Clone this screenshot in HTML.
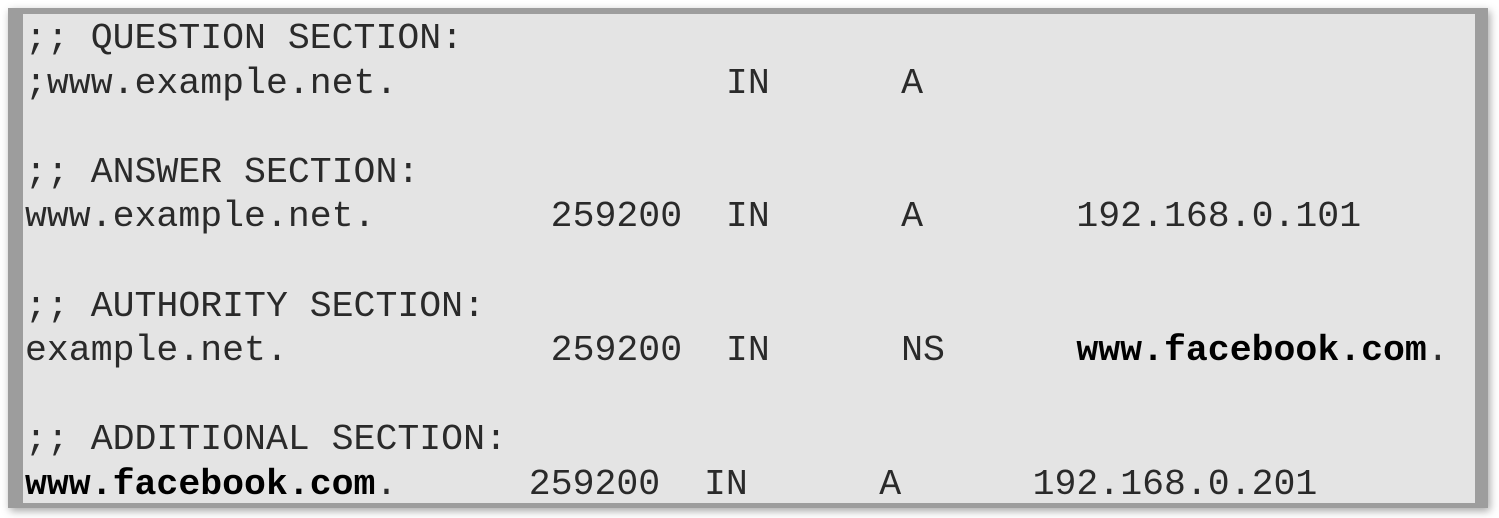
<!DOCTYPE html>
<html><head><style>
html,body{margin:0;padding:0;background:#fff;width:1499px;height:518px;overflow:hidden}
.box{position:absolute;left:8px;top:8px;width:1480px;height:500px;background:#9d9d9d;box-shadow:2px 3px 8px rgba(0,0,0,0.35)}
.in{position:absolute;left:23px;top:14px;width:1452px;height:489px;background:#e4e4e4}
pre{position:absolute;left:25px;top:17px;margin:0;font-family:"Liberation Mono",monospace;font-size:36.5px;line-height:44.6px;color:#2a2a2a;letter-spacing:0}
b{font-weight:bold;color:#000}
</style></head><body>
<div class="box"></div><div class="in"></div>
<pre>;; QUESTION SECTION:
;www.example.net.               IN      A

;; ANSWER SECTION:
www.example.net.        259200  IN      A       192.168.0.101

;; AUTHORITY SECTION:
example.net.            259200  IN      NS      <b>www.facebook.com</b>.

;; ADDITIONAL SECTION:
<b>www.facebook.com</b>.      259200  IN      A      192.168.0.201</pre>
</body></html>
